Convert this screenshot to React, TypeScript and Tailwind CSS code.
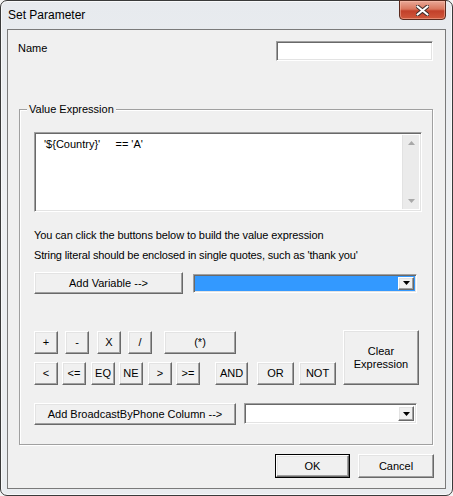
const font = "font-['Liberation_Sans',Arial,sans-serif]";

const raised =
  "bg-[#f0f0f0] border border-t-white border-l-white border-b-[#696969] border-r-[#696969] shadow-[inset_-1px_-1px_0_#a0a0a0,inset_1px_1px_0_#e3e3e3]";
const sunken =
  "border border-t-[#a0a0a0] border-l-[#a0a0a0] border-b-white border-r-white shadow-[inset_1px_1px_0_#696969,inset_-1px_-1px_0_#e3e3e3]";

const Btn = ({ label, className = "" }: { label: string; className?: string }) => (
  <div className={`${raised} flex items-center justify-center text-[11px] text-black ${className}`}>
    {label}
  </div>
);

const Combo = ({ className = "", fill = "bg-white" }: { className?: string; fill?: string }) => (
  <div className={`${sunken} ${fill} flex justify-end p-[2px] ${className}`}>
    <div className={`${raised} w-[16px] h-full flex items-center justify-center`}>
      <svg width="7" height="4" viewBox="0 0 7 4">
        <path d="M0 0h7L3.5 4z" fill="#000" />
      </svg>
    </div>
  </div>
);

const Arrow = ({ up }: { up?: boolean }) => (
  <svg width="7" height="4" viewBox="0 0 7 4">
    <path d={up ? "M0 4h7L3.5 0z" : "M0 0h7L3.5 4z"} fill="#a8a8a8" />
  </svg>
);

export default function App() {
  return (
    <div className={`${font} w-[453px] h-[496px] bg-[#f4f4f4]`}>
      <div className="w-[453px] h-[496px] rounded-[7px] border border-[#3a3a3a] bg-[linear-gradient(180deg,#e7eaee_0%,#eef0f2_40%,#e9ecef_100%)] flex flex-col px-[6px] pb-[6px] shadow-[inset_0_0_0_1px_#f8f9fa]">
        <div className="h-[28px] flex justify-between items-start shrink-0">
          <span className="mt-[7px] ml-[1px] text-[12px] leading-[15px] text-black">Set Parameter</span>
          <div className="-mt-px w-[47px] h-[20px] rounded-b-[4px] border border-[#5a2a1e] bg-[linear-gradient(180deg,#e9a897_0%,#d9765d_45%,#c2402a_55%,#d0583c_100%)] flex items-center justify-center shadow-[inset_0_0_0_1px_rgba(255,200,180,0.45)]">
            <svg width="13" height="11" viewBox="0 0 13 11">
              <path d="M1.5 1.5L11.5 9.5M11.5 1.5L1.5 9.5" stroke="#3b2a28" strokeWidth="4" strokeLinecap="round" />
              <path d="M1.5 1.5L11.5 9.5M11.5 1.5L1.5 9.5" stroke="#ffffff" strokeWidth="2.2" strokeLinecap="round" />
            </svg>
          </div>
        </div>

        <div className="flex-1 border border-[#7a7a7a] bg-[#f0f0f0] flex flex-col text-[11px] leading-[13px] text-black">
          <div className="mt-[11px] pl-[10px] pr-[12px] flex justify-between items-start">
            <span className="mt-[1px]">Name</span>
            <div className={`${sunken} bg-white w-[157px] h-[20px]`} />
          </div>

          <div className="relative mt-[48px] ml-[11px] w-[414px] h-[336px] border border-[#a0a0a0] shadow-[inset_1px_1px_0_#ffffff,1px_1px_0_#ffffff] flex flex-col">
            <span className="absolute -top-[7px] left-[7px] px-[2px] bg-[#f0f0f0]">Value Expression</span>

            <div className={`${sunken} bg-white ml-[14px] mt-[22px] w-[388px] h-[80px] flex p-[2px]`}>
              <div className="flex-1 pl-[7px] pt-[3px] whitespace-pre">{"'${Country}'     == 'A'"}</div>
              <div className="w-[17px] bg-[#ebebeb] border-l border-[#e2e2e2] flex flex-col justify-between items-center py-[6px]">
                <Arrow up />
                <Arrow />
              </div>
            </div>

            <div className="ml-[14px] mt-[17px] tracking-[-0.1px]">You can click the buttons below to build the value expression</div>
            <div className="ml-[14px] mt-[7px] tracking-[-0.15px]">String literal should be enclosed in single quotes, such as 'thank you'</div>

            <div className="ml-[14px] mt-[10px] flex items-center">
              <Btn label="Add Variable -->" className="w-[149px] h-[22px]" />
              <Combo fill="bg-[#3399ff]" className="ml-[10px] w-[224px] h-[19px]" />
            </div>

            <div className="ml-[14px] mt-[37px] flex items-start">
              <div className="flex flex-col gap-[8px]">
                <div className="flex items-center">
                  <Btn label="+" className="w-[24px] h-[23px]" />
                  <Btn label="-" className="ml-[7px] w-[24px] h-[23px]" />
                  <Btn label="X" className="ml-[8px] w-[24px] h-[23px]" />
                  <Btn label="/" className="ml-[7px] w-[24px] h-[23px]" />
                  <Btn label="(*)" className="ml-[12px] w-[72px] h-[23px]" />
                </div>
                <div className="flex items-center">
                  <Btn label="<" className="w-[24px] h-[23px]" />
                  <Btn label="<=" className="ml-[4px] w-[24px] h-[23px]" />
                  <Btn label="EQ" className="ml-[5px] w-[24px] h-[23px]" />
                  <Btn label="NE" className="ml-[4px] w-[24px] h-[23px]" />
                  <Btn label=">" className="ml-[5px] w-[24px] h-[23px]" />
                  <Btn label=">=" className="ml-[4px] w-[24px] h-[23px]" />
                  <Btn label="AND" className="ml-[15px] w-[33px] h-[23px]" />
                  <Btn label="OR" className="ml-[9px] w-[37px] h-[23px]" />
                  <Btn label="NOT" className="ml-[5px] w-[37px] h-[23px]" />
                </div>
              </div>
              <div className={`${raised} -mt-px ml-[7px] w-[76px] h-[55px] flex flex-col items-center justify-center text-center leading-[13px]`}>
                <span>Clear</span>
                <span>Expression</span>
              </div>
            </div>

            <div className="ml-[14px] mt-[18px] flex items-start">
              <Btn label="Add BroadcastByPhone Column -->" className="w-[202px] h-[22px]" />
              <Combo className="ml-[8px] w-[173px] h-[21px]" />
            </div>
          </div>

          <div className="mt-[9px] mr-[11px] flex justify-end">
            <div className="border border-[#000] w-[75px] h-[24px]">
              <Btn label="OK" className="w-full h-full" />
            </div>
            <Btn label="Cancel" className="ml-[8px] w-[76px] h-[24px]" />
          </div>
        </div>
      </div>
    </div>
  );
}
